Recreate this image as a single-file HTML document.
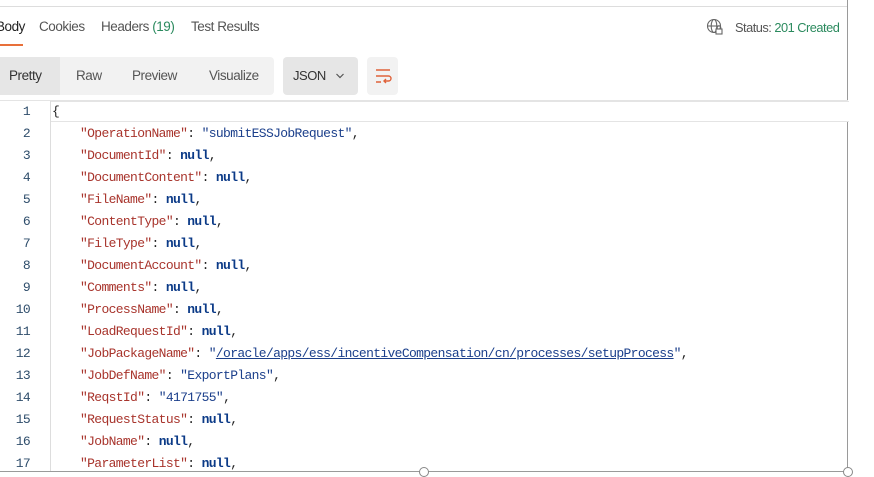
<!DOCTYPE html>
<html><head><meta charset="utf-8"><style>
body{margin:0;width:874px;height:474px;background:#fff;position:relative;overflow:hidden;font-family:"Liberation Sans",sans-serif;}
.abs{position:absolute}
.tab{position:absolute;top:19px;font-size:13.5px;color:#555;letter-spacing:-0.45px}
.code{position:absolute;left:0;top:101px;width:848px;font-family:"Liberation Mono",monospace;font-size:13px;letter-spacing:-0.65px}
.ln{position:absolute;left:0;width:30px;text-align:right;color:#2e4d6b;font-size:13px}
.tx{position:absolute;left:80px;white-space:pre;color:#222}
.k{color:#a8342c}.s{color:#1b3f8b}.n{color:#0b3a87;font-weight:bold}
</style></head><body>
<div class="abs" style="left:0;top:6px;width:848px;height:1px;background:#ddd"></div>
<div class="abs" style="left:847px;top:0;width:1px;height:472px;background:#9a9a9a"></div>
<div class="tab" style="left:-4px;color:#222">Body</div>
<div class="abs" style="left:0;top:44px;width:23px;height:2px;background:#e8703a"></div>
<div class="tab" style="left:39px">Cookies</div>
<div class="tab" style="left:101px">Headers <span style="color:#2b8a5e">(19)</span></div>
<div class="tab" style="left:191px">Test Results</div>
<svg class="abs" style="left:706px;top:18px" width="18" height="18" viewBox="0 0 18 18" fill="none" stroke="#666" stroke-width="1.1"><circle cx="8" cy="8" r="6.5"/><ellipse cx="8" cy="8" rx="2.8" ry="6.5"/><line x1="1.5" y1="8" x2="14.5" y2="8"/><rect x="10" y="11" width="6" height="5" fill="#fff"/><path d="M11.2 11V9.6a1.8 1.8 0 0 1 3.6 0V11"/></svg>
<div class="tab" style="left:735px;font-size:12.8px;top:20px;letter-spacing:-0.5px">Status: <span style="color:#2b8a5e">201 Created</span></div>
<div class="abs" style="left:0;top:57px;width:274px;height:38px;background:#f2f2f2;border-radius:0 4px 4px 0"></div>
<div class="abs" style="left:0;top:57px;width:60px;height:38px;background:#e6e6e6"></div>
<div class="tab" style="left:9px;top:68px;color:#333">Pretty</div>
<div class="tab" style="left:76px;top:68px">Raw</div>
<div class="tab" style="left:132px;top:68px">Preview</div>
<div class="tab" style="left:209px;top:68px">Visualize</div>
<div class="abs" style="left:283px;top:57px;width:75px;height:38px;background:#e6e6e6;border-radius:4px"></div>
<div class="tab" style="left:293px;top:68px;font-size:13px;color:#333">JSON</div>
<svg class="abs" style="left:335px;top:72px" width="10" height="8"><path d="M1.5 2l3.5 3.5L8.5 2" stroke="#555" stroke-width="1.2" fill="none"/></svg>
<div class="abs" style="left:367px;top:57px;width:31px;height:38px;background:#f2f2f2;border-radius:4px"></div>
<svg class="abs" style="left:374px;top:67px" width="18" height="18" fill="none" stroke="#e0623a" stroke-width="1.4"><path d="M2 3h14M2 9h12.5a2.5 2.5 0 0 1 0 5H10M12 12l-2 2 2 2M2 15h5"/></svg>
<div class="abs" style="left:50px;top:101px;width:798px;height:19px;border:1px solid #e4e4e4;border-right:none;background:#fff"></div>
<div class="abs" style="left:0;top:100px;width:848px;height:1px;background:#e4e4e4"></div>
<div class="abs" style="left:50px;top:101px;width:1px;height:371px;background:#ddd"></div>
<div class="abs" style="left:0;top:471px;width:848px;height:1px;background:#9a9a9a"></div>
<div class="abs" style="left:419px;top:467px;width:8px;height:8px;border:1px solid #888;border-radius:50%;background:#fff"></div>
<div class="abs" style="left:843px;top:467px;width:8px;height:8px;border:1px solid #888;border-radius:50%;background:#fff"></div>
<div class="code">
<div class="ln" style="top:3px">1</div><div class="tx" style="top:3px;left:52px">{</div>
<div class="ln" style="top:25px">2</div><div class="tx" style="top:25px"><span class="k">"OperationName"</span>: <span class="s">"submitESSJobRequest"</span>,</div>
<div class="ln" style="top:47px">3</div><div class="tx" style="top:47px"><span class="k">"DocumentId"</span>: <span class="n">null</span>,</div>
<div class="ln" style="top:69px">4</div><div class="tx" style="top:69px"><span class="k">"DocumentContent"</span>: <span class="n">null</span>,</div>
<div class="ln" style="top:91px">5</div><div class="tx" style="top:91px"><span class="k">"FileName"</span>: <span class="n">null</span>,</div>
<div class="ln" style="top:113px">6</div><div class="tx" style="top:113px"><span class="k">"ContentType"</span>: <span class="n">null</span>,</div>
<div class="ln" style="top:135px">7</div><div class="tx" style="top:135px"><span class="k">"FileType"</span>: <span class="n">null</span>,</div>
<div class="ln" style="top:157px">8</div><div class="tx" style="top:157px"><span class="k">"DocumentAccount"</span>: <span class="n">null</span>,</div>
<div class="ln" style="top:179px">9</div><div class="tx" style="top:179px"><span class="k">"Comments"</span>: <span class="n">null</span>,</div>
<div class="ln" style="top:201px">10</div><div class="tx" style="top:201px"><span class="k">"ProcessName"</span>: <span class="n">null</span>,</div>
<div class="ln" style="top:223px">11</div><div class="tx" style="top:223px"><span class="k">"LoadRequestId"</span>: <span class="n">null</span>,</div>
<div class="ln" style="top:245px">12</div><div class="tx" style="top:245px"><span class="k">"JobPackageName"</span>: <span class="s">"<span style="text-decoration:underline">/oracle/apps/ess/incentiveCompensation/cn/processes/setupProcess</span>"</span>,</div>
<div class="ln" style="top:267px">13</div><div class="tx" style="top:267px"><span class="k">"JobDefName"</span>: <span class="s">"ExportPlans"</span>,</div>
<div class="ln" style="top:289px">14</div><div class="tx" style="top:289px"><span class="k">"ReqstId"</span>: <span class="s">"4171755"</span>,</div>
<div class="ln" style="top:311px">15</div><div class="tx" style="top:311px"><span class="k">"RequestStatus"</span>: <span class="n">null</span>,</div>
<div class="ln" style="top:333px">16</div><div class="tx" style="top:333px"><span class="k">"JobName"</span>: <span class="n">null</span>,</div>
<div class="ln" style="top:355px">17</div><div class="tx" style="top:355px"><span class="k">"ParameterList"</span>: <span class="n">null</span>,</div>
</div>
</body></html>
